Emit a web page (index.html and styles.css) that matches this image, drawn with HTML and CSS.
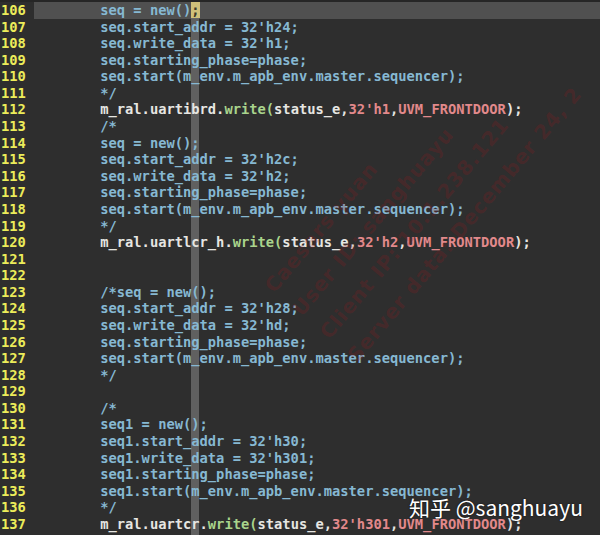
FILE: index.html
```html
<!DOCTYPE html>
<html lang="en">
<head>
  <meta charset="UTF-8">
  <title>uart_reg_seq.sv - vim</title>
  <link rel="stylesheet" href="styles.css">
</head>
<body>
  <div class="editor">
    <div class="colorcolumn"></div>

    <div class="line current"><span class="nr">106 </span><span class="code"><span class="cm">        seq = new()</span><span class="cursor">;</span></span></div>
    <div class="line"><span class="nr">107 </span><span class="code cm">        seq.start_addr = 32'h24;</span></div>
    <div class="line"><span class="nr">108 </span><span class="code cm">        seq.write_data = 32'h1;</span></div>
    <div class="line"><span class="nr">109 </span><span class="code cm">        seq.starting_phase=phase;</span></div>
    <div class="line"><span class="nr">110 </span><span class="code cm">        seq.start(m_env.m_apb_env.master.sequencer);</span></div>
    <div class="line"><span class="nr">111 </span><span class="code cm">        */</span></div>
    <div class="line"><span class="nr">112 </span><span class="code">        m_ral.uartibrd.<span class="fn">write(</span>status_e,<span class="cn">32'h1</span>,<span class="cn">UVM_FRONTDOOR</span>);</span></div>
    <div class="line"><span class="nr">113 </span><span class="code cm">        /*</span></div>
    <div class="line"><span class="nr">114 </span><span class="code cm">        seq = new();</span></div>
    <div class="line"><span class="nr">115 </span><span class="code cm">        seq.start_addr = 32'h2c;</span></div>
    <div class="line"><span class="nr">116 </span><span class="code cm">        seq.write_data = 32'h2;</span></div>
    <div class="line"><span class="nr">117 </span><span class="code cm">        seq.starting_phase=phase;</span></div>
    <div class="line"><span class="nr">118 </span><span class="code cm">        seq.start(m_env.m_apb_env.master.sequencer);</span></div>
    <div class="line"><span class="nr">119 </span><span class="code cm">        */</span></div>
    <div class="line"><span class="nr">120 </span><span class="code">        m_ral.uartlcr_h.<span class="fn">write(</span>status_e,<span class="cn">32'h2</span>,<span class="cn">UVM_FRONTDOOR</span>);</span></div>
    <div class="line"><span class="nr">121 </span><span class="code"></span></div>
    <div class="line"><span class="nr">122 </span><span class="code"></span></div>
    <div class="line"><span class="nr">123 </span><span class="code cm">        /*seq = new();</span></div>
    <div class="line"><span class="nr">124 </span><span class="code cm">        seq.start_addr = 32'h28;</span></div>
    <div class="line"><span class="nr">125 </span><span class="code cm">        seq.write_data = 32'hd;</span></div>
    <div class="line"><span class="nr">126 </span><span class="code cm">        seq.starting_phase=phase;</span></div>
    <div class="line"><span class="nr">127 </span><span class="code cm">        seq.start(m_env.m_apb_env.master.sequencer);</span></div>
    <div class="line"><span class="nr">128 </span><span class="code cm">        */</span></div>
    <div class="line"><span class="nr">129 </span><span class="code"></span></div>
    <div class="line"><span class="nr">130 </span><span class="code cm">        /*</span></div>
    <div class="line"><span class="nr">131 </span><span class="code cm">        seq1 = new();</span></div>
    <div class="line"><span class="nr">132 </span><span class="code cm">        seq1.start_addr = 32'h30;</span></div>
    <div class="line"><span class="nr">133 </span><span class="code cm">        seq1.write_data = 32'h301;</span></div>
    <div class="line"><span class="nr">134 </span><span class="code cm">        seq1.starting_phase=phase;</span></div>
    <div class="line"><span class="nr">135 </span><span class="code cm">        seq1.start(m_env.m_apb_env.master.sequencer);</span></div>
    <div class="line"><span class="nr">136 </span><span class="code cm">        */</span></div>
    <div class="line"><span class="nr">137 </span><span class="code">        m_ral.uartcr.<span class="fn">write(</span>status_e,<span class="cn">32'h301</span>,<span class="cn">UVM_FRONTDOOR</span>);</span></div>

    <!-- faint diagonal watermark -->
    <div class="watermark">
      <p>Caesars yuan</p>
      <p>User ID: sanghuayu</p>
      <p>Client IP: 10.1.238.121</p>
      <p>Server data: December 24, 2</p>
    </div>

    <div class="credit">知乎 @sanghuayu</div>
  </div>
</body>
</html>
```

FILE: styles.css
```css
body {
  margin: 0;
  background: #2e2e2e;
  font-family: "DejaVu Sans Mono", "Liberation Mono", monospace;
  font-size: 13.75px;
  font-weight: bold;
}
.editor {
  position: relative;
  height: 535px;
  overflow: hidden;
  box-sizing: border-box;
  border-top: 2px solid #262626;
}
.colorcolumn {
  position: absolute;
  top: 0;
  bottom: 0;
  left: 191px;
  width: 8.3px;
  background: #606060;
}
.line {
  position: relative;
  display: flex;
  height: 16.58px;
  line-height: 16.58px;
  white-space: pre;
  padding-left: 1px;
}
.nr {
  width: 33px;
  flex: none;
  color: #ecec5a;
}
.code {
  flex: 1;
  color: #e6e6e2;
}
.current .code {
  background: rgba(110, 110, 110, 0.55);
}
.cm {
  color: #86b8d2;
}
.fn {
  color: #a9d48c;
}
.cn {
  color: #e2898b;
}
.cursor {
  background: #cfc07a;
  color: #3a3a2a;
}
.watermark {
  position: absolute;
  left: 255px;
  top: 276px;
  transform: rotate(-50deg);
  transform-origin: left top;
  font-family: "DejaVu Sans", sans-serif;
  font-size: 20px;
  font-weight: bold;
  letter-spacing: 1px;
  color: rgba(150, 25, 30, 0.24);
  pointer-events: none;
}
.watermark p {
  margin: 0;
  white-space: nowrap;
  line-height: 36px;
}
.credit {
  position: absolute;
  left: 409px;
  top: 490px;
  font-family: "Noto Sans CJK SC", "Noto Sans", sans-serif;
  font-size: 21px;
  font-weight: normal;
  color: #ffffff;
  text-shadow: 0 0 2px rgba(0, 0, 0, 0.7);
}
```
